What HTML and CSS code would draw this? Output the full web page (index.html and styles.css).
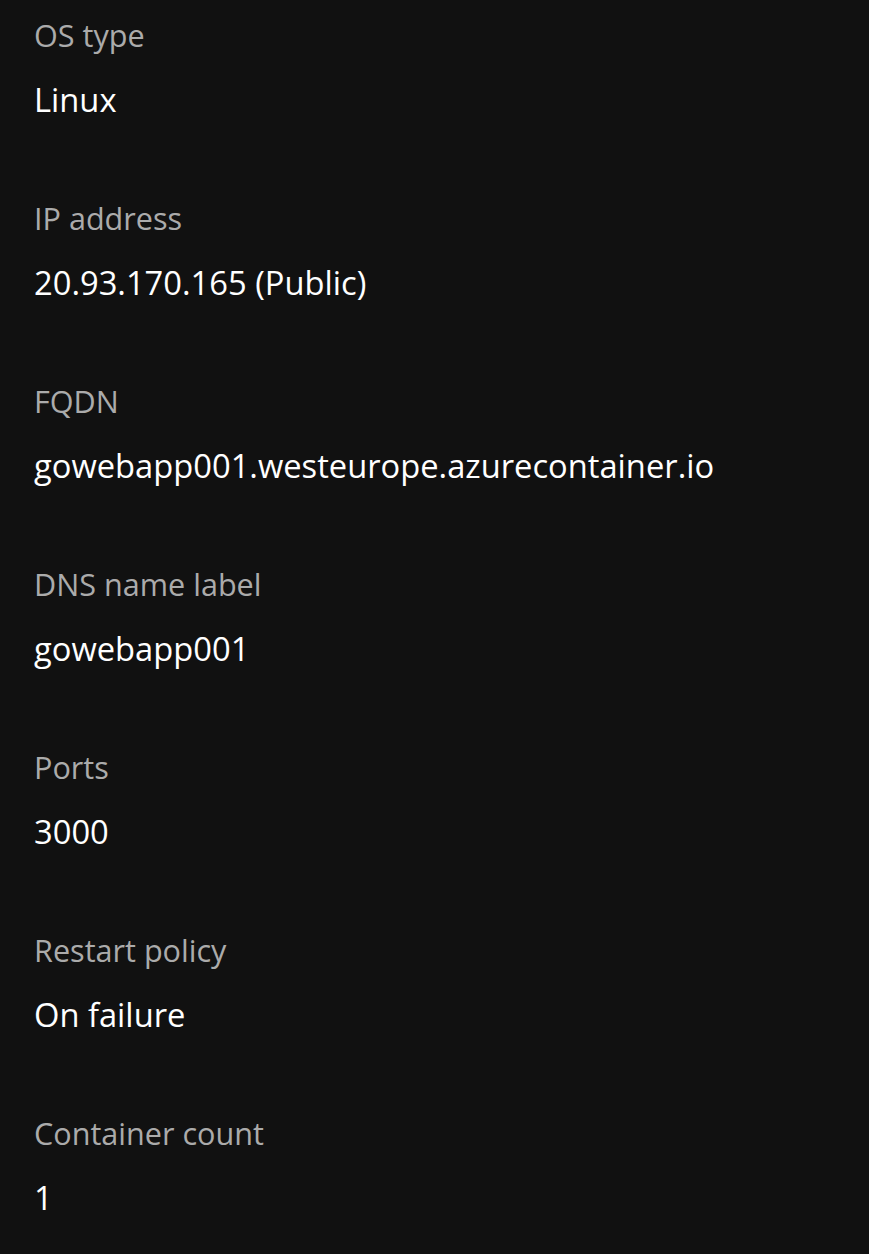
FILE: index.html
```html
<!DOCTYPE html>
<html>
<head>
<meta charset="utf-8">
<link rel="stylesheet" href="styles.css">
</head>
<body>
<div class="props">
  <div class="prop"><div class="label">OS type</div><div class="value">Linux</div></div>
  <div class="prop"><div class="label">IP address</div><div class="value">20.93.170.165 (Public)</div></div>
  <div class="prop"><div class="label">FQDN</div><div class="value">gowebapp001.westeurope.azurecontainer.io</div></div>
  <div class="prop"><div class="label">DNS name label</div><div class="value">gowebapp001</div></div>
  <div class="prop"><div class="label">Ports</div><div class="value">3000</div></div>
  <div class="prop"><div class="label">Restart policy</div><div class="value">On failure</div></div>
  <div class="prop"><div class="label">Container count</div><div class="value">1</div></div>
</div>
</body>
</html>
```
FILE: styles.css
```css
html, body {
  margin: 0;
  padding: 0;
  background: #111111;
}
body {
  font-family: "Open Sans", "Noto Sans", sans-serif;
}
.props {
  display: flex;
  flex-direction: column;
  gap: 78px;
  padding: 15px 34px;
}
.prop {
  display: flex;
  flex-direction: column;
  gap: 25px;
}
.label {
  color: #ababab;
  font-size: 30.6px;
  line-height: 40px;
}
.value {
  color: #ffffff;
  font-size: 32.7px;
  line-height: 40px;
}
```
